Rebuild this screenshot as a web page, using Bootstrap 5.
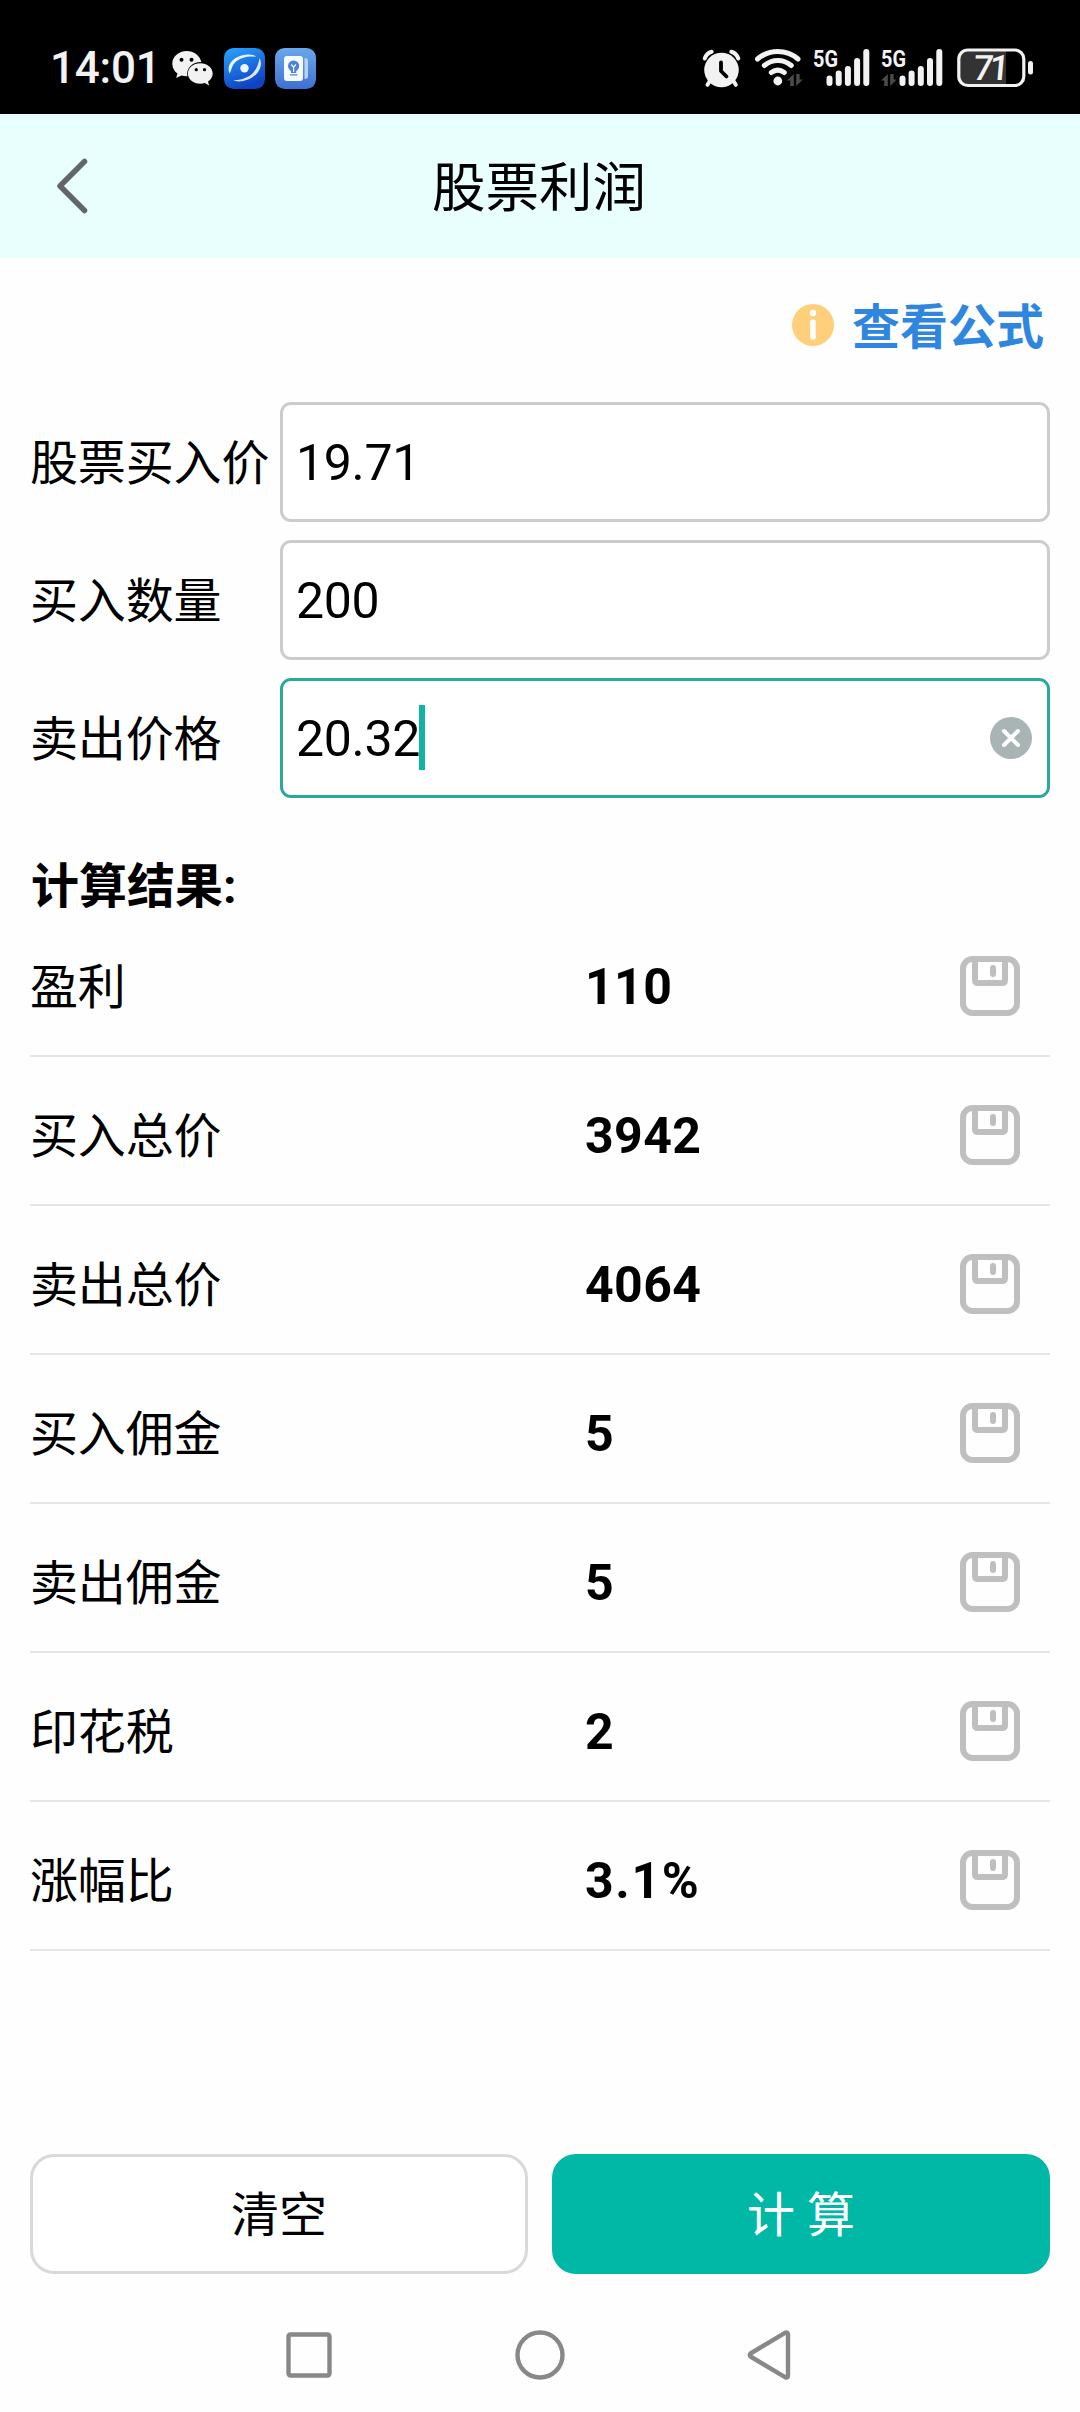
<!DOCTYPE html>
<html lang="zh-CN">
<head>
<meta charset="utf-8">
<meta name="viewport" content="width=device-width, initial-scale=1">
<title>股票利润</title>
<link href="https://cdn.jsdelivr.net/npm/bootstrap@5.3.0/dist/css/bootstrap.min.css" rel="stylesheet">
<style>
  body { font-family: Roboto, "Noto Sans CJK SC", sans-serif; font-size: 48px; line-height: 60px; color: #000; background: #fefefe; }
  .screen { width: 1080px; height: 2412px; overflow: hidden; }
  svg { display: block; flex: none; }
  .statusbar { height: 114px; padding: 38px 46px 0 50px; background: #000; color: #f2f2f2; }
  .clock { width: 121px; font-size: 44px; line-height: 61px; font-weight: 500; letter-spacing: -.2px; white-space: nowrap; }
  .app-icons { gap: 10px; margin-left: 7px; }
  .titlebar { height: 144px; background: #e8fffe; }
  .titlebar h1 { font-size: 53.5px; line-height: 60px; font-weight: 400; padding: 5px 2px 0 0; }
  .back { padding: 0 0 0 50px; width: 100px; }
  .formula { height: 144px; padding: 37px 36px 0 0; font-weight: 700; line-height: 60px; }
  .formula svg { margin-right: 17px; }
  .formula a { color: #2e86de; padding-top: 3px; }
  .entry { gap: 18px; padding: 0 30px; }
  .entry-label { width: 250px; padding-top: 3px; white-space: nowrap; letter-spacing: -.15px; }
  .form-control, .form-control:focus { height: 120px; border: 3px solid #ccc; border-radius: 11px; padding: 1px 14px 0 13px; font-size: 50px; line-height: 60px; letter-spacing: -.3px; color: #000; background: #fff; box-shadow: none; }
  .form-control.editing { border-color: #2aa89b; }
  .caret { position: absolute; left: 139px; top: 27px; width: 6px; height: 65px; background: #12b3a2; }
  .wipe { position: absolute; right: 18px; top: 39px; }
  .results { padding: 0 30px; }
  .results h2 { font-size: 48px; line-height: 60px; font-weight: 700; margin: 59px 0 -3px; padding-left: 1px; }
  .result { height: 149px; padding: 9px 30px 0 0; border-bottom: 2px solid #e5e5e5; }
  .result:first-of-type { height: 143px; padding-top: 3px; }
  .result-name { width: 555px; padding-top: 3px; letter-spacing: -.15px; }
  .result-value { font-size: 50px; font-weight: 700; letter-spacing: .4px; padding-top: 1px; }
  .result-value.percent { letter-spacing: 1.6px; }
  .actions { gap: 24px; padding: 203px 30px 0; }
  .actions .btn { height: 120px; border-radius: 24px; font-size: 48px; line-height: 60px; padding: 3px 0 0; border: 3px solid #d9d9d9; color: #000; background: #fff; }
  .actions .btn-go { border-color: #00b8a5; background: #00b8a5; color: #fff; }
  .sysnav { padding-top: 56px; gap: 181px; }
</style>
</head>
<body>
<div class="screen d-flex flex-column">

  <div class="statusbar d-flex align-items-start flex-shrink-0">
    <span class="clock">14:01</span>
    <svg width="46" height="61" viewBox="172 38 46 61">
      <path fill="#f2f2f2" d="M187.700 51c-8 0-14.400 5.600-14.400 12.700 0 4 2 7.500 5.200 9.900l-1.300 4.400 5.200-2.600a18 18 0 0 0 6 .8c-1.500-8.700 5.500-14.400 14-14.200-1.600-6.400-7.600-11-14.700-11Z"/>
      <path fill="#f2f2f2" d="M201.300 63.300c-7 0-12.400 4.600-12.400 10.200s5.400 10.300 12.400 10.300c1.700 0 3.100-.2 4.500-.7l4.300 2.400-1.100-3.900c3-2 4.700-4.800 4.700-8.100 0-5.600-5.400-10.200-12.400-10.200Z"/>
      <g fill="#000"><circle cx="182.500" cy="59.700" r="2"/><circle cx="192.500" cy="59.700" r="2"/><circle cx="197.300" cy="69.700" r="1.600"/><circle cx="205.500" cy="69.700" r="1.600"/></g>
    </svg>
    <div class="app-icons d-flex">
      <svg width="41" height="61" viewBox="224 38 41 61">
        <defs><linearGradient id="eye" x1="0" y1="0" x2=".4" y2="1"><stop offset="0" stop-color="#29a7ff"/><stop offset="1" stop-color="#0f43c4"/></linearGradient>
        <linearGradient id="note" x1="0" y1="0" x2="0" y2="1"><stop offset="0" stop-color="#69a8ea"/><stop offset="1" stop-color="#3e70d2"/></linearGradient></defs>
        <rect x="224" y="48" width="41" height="41" rx="9.500" fill="url(#eye)"/>
        <path fill="#eef5ff" d="M229.500 73.500c-3.200-8 2.500-15.500 12-18 6.500-1.700 12.500-1.300 14.500 1.300-8-1-16 1-20.500 5.200-4 3.700-3.500 7.500-6 11.500Z"/>
        <path fill="#dfe6fb" d="M259.700 58c3.700 8-1.500 17.500-11.700 21.500-6 2.300-12 2.600-14.500.5 8 .3 15-2.500 19.500-7 4-4.300 5.200-9 6.700-15Z"/>
        <circle cx="244.500" cy="68.300" r="4.200" fill="#eef6ff"/>
      </svg>
      <svg width="41" height="61" viewBox="275 38 41 61">
        <rect x="275" y="48" width="41" height="41" rx="9.500" fill="url(#note)"/>
        <rect x="284" y="56" width="19" height="25" rx="3" fill="#f5fbff"/>
        <path fill="#b7d3f7" d="M304.500 58c2.500 0 3.500 1 3.500 3v15c0 2-1 3-3.500 3Z"/>
        <circle cx="293.600" cy="66" r="5.600" fill="#4b83d9"/><path fill="#4b83d9" d="M291 70h5.200v3H291zM289.800 74.300h7.600v1.300h-7.600z"/>
        <path d="m291.300 64.500 2.300 2.700 2.300-2.700M293.600 67v5" stroke="#f5fbff" stroke-width="1.200" fill="none"/>
      </svg>
    </div>
    <svg class="ms-auto" width="333" height="61" viewBox="701 38 333 61">
      <path fill="none" stroke="#f2f2f2" stroke-linecap="round" stroke-width="4" d="M704.700 58.500q2-5.500 7-6.800M738.300 58.500q-2-5.500-7-6.800M709.500 81.500l-2 3.300M733.800 81.500l2 3.300"/>
      <circle cx="721.500" cy="70" r="17.300" fill="#f2f2f2"/>
      <path fill="none" stroke="#000" stroke-width="3.800" stroke-linecap="round" stroke-linejoin="round" d="M721 62.500v8.500l5.500 5.500"/>
      <path fill="none" stroke="#f2f2f2" stroke-width="5" stroke-linecap="round" d="M757.500 59c11.500-10 29-10 40.500 0M764.300 65.500c8-6.700 19-6.700 27 0M771.300 72.500c4-3 9-3 13 0"/>
      <circle cx="777.800" cy="81" r="4.400" fill="#f2f2f2"/>
      <g id="updown" fill="#4a4a4a"><path d="M793.800 74v12h-3.600v-5.500H787ZM796.200 86V74h3.400v5.500h3.200Z"/></g>
      <use href="#updown" x="94"/>
      <g fill="#f2f2f2" font-family="Roboto" font-weight="700" font-size="24.500">
        <text x="813" y="67" textLength="25" lengthAdjust="spacingAndGlyphs">5G</text>
        <text x="881" y="67" textLength="25" lengthAdjust="spacingAndGlyphs">5G</text>
      </g>
      <g fill="none" stroke="#f2f2f2" stroke-width="6" stroke-linecap="round">
        <path d="M829.500 78.500V83M838.700 73.500V83M847.900 69V83M857.100 61V83M866.300 52V83"/>
        <path d="M902.500 78.500V83M911.600 73.500V83M920.800 69V83M930 61V83M939.300 52V83"/>
      </g>
      <path fill="#333" d="M966 51h40v34h-40q-6-2-6-8V59q0-6 6-8Z"/>
      <rect x="958.800" y="50" width="65" height="35.500" rx="9" fill="none" stroke="#f2f2f2" stroke-width="3.200"/>
      <rect x="1028" y="61" width="5" height="13.500" rx="2.500" fill="#f2f2f2"/>
      <text transform="translate(972.500 80) skewX(-5)" fill="#f2f2f2" font-family="Roboto" font-weight="500" font-size="35" textLength="36">71</text>
    </svg>
  </div>

  <header class="titlebar d-flex align-items-center flex-shrink-0">
    <div class="back"><svg width="50" height="60" viewBox="50 156 50 60"><path d="M84.500 161.500 60 186l24.500 24.500" fill="none" stroke="#606766" stroke-width="5.500" stroke-linecap="round" stroke-linejoin="round"/></svg></div>
    <h1 class="flex-fill text-center mb-0">股票利润</h1>
    <div class="back"></div>
  </header>

  <div class="formula d-flex justify-content-end align-items-start flex-shrink-0">
    <svg width="44" height="60" viewBox="791 295 44 60"><circle cx="813" cy="325" r="21" fill="#ffcf7b"/><circle cx="813" cy="313" r="3.200" fill="#fff"/><path d="M813 322v15" stroke="#fff" stroke-width="5.500" stroke-linecap="round"/></svg>
    <a class="text-decoration-none">查看公式</a>
  </div>

  <form class="entry d-flex flex-column flex-shrink-0">
    <div class="d-flex align-items-center"><label class="entry-label" for="buy">股票买入价</label><div class="flex-fill"><input class="form-control" id="buy" value="19.71"></div></div>
    <div class="d-flex align-items-center"><label class="entry-label" for="qty">买入数量</label><div class="flex-fill"><input class="form-control" id="qty" value="200"></div></div>
    <div class="d-flex align-items-center"><label class="entry-label" for="sell">卖出价格</label>
      <div class="flex-fill position-relative"><input class="form-control editing" id="sell" value="20.32"><span class="caret"></span>
        <svg class="wipe" width="42" height="42" viewBox="-21 -21 42 42"><circle r="21" fill="#a9b5b4"/><path d="m-7-7L7 7M7-7-7 7" stroke="#fff" stroke-width="4" stroke-linecap="round"/></svg>
      </div></div>
  </form>

  <svg width="0" height="0" class="position-absolute"><symbol id="save" viewBox="0 0 60 60"><g fill="none" stroke="#bfbfbf" stroke-width="6"><rect x="3" y="3" width="54" height="54" rx="9.500"/><path d="M15 3v21q0 3 3 3h24q3 0 3-3V3"/><path d="M33 12v6" stroke-linecap="round"/></g></symbol></svg>

  <section class="results flex-shrink-0">
    <h2>计算结果:</h2>
    <div class="result d-flex align-items-center"><span class="result-name">盈利</span><span class="result-value">110</span><svg class="ms-auto" width="60" height="60"><use href="#save"/></svg></div>
    <div class="result d-flex align-items-center"><span class="result-name">买入总价</span><span class="result-value">3942</span><svg class="ms-auto" width="60" height="60"><use href="#save"/></svg></div>
    <div class="result d-flex align-items-center"><span class="result-name">卖出总价</span><span class="result-value">4064</span><svg class="ms-auto" width="60" height="60"><use href="#save"/></svg></div>
    <div class="result d-flex align-items-center"><span class="result-name">买入佣金</span><span class="result-value">5</span><svg class="ms-auto" width="60" height="60"><use href="#save"/></svg></div>
    <div class="result d-flex align-items-center"><span class="result-name">卖出佣金</span><span class="result-value">5</span><svg class="ms-auto" width="60" height="60"><use href="#save"/></svg></div>
    <div class="result d-flex align-items-center"><span class="result-name">印花税</span><span class="result-value">2</span><svg class="ms-auto" width="60" height="60"><use href="#save"/></svg></div>
    <div class="result d-flex align-items-center"><span class="result-name">涨幅比</span><span class="result-value percent">3.1%</span><svg class="ms-auto" width="60" height="60"><use href="#save"/></svg></div>
  </section>

  <div class="actions d-flex flex-shrink-0">
    <button class="btn col" type="button">清空</button>
    <button class="btn btn-go col" type="button">计 算</button>
  </div>

  <nav class="sysnav d-flex justify-content-center">
    <svg width="50" height="50" viewBox="-25 -25 50 50" fill="none" stroke="#888" stroke-width="4.400"><rect x="-20.500" y="-20.500" width="41" height="41" rx="2"/></svg>
    <svg width="50" height="50" viewBox="-25 -25 50 50" fill="none" stroke="#888" stroke-width="4.400"><circle r="22.500"/></svg>
    <svg width="50" height="50" viewBox="-25 -25 50 50" fill="none" stroke="#888" stroke-width="4.400" stroke-linejoin="round"><path d="M-20.500-1.500Q-22 0-20.500 1.500L14 22.200q3 1.200 3-1.700v-41q0-2.900-3-1.700Z"/></svg>
  </nav>
</div>
<script src="https://cdn.jsdelivr.net/npm/bootstrap@5.3.0/dist/js/bootstrap.bundle.min.js"></script>
</body>
</html>
